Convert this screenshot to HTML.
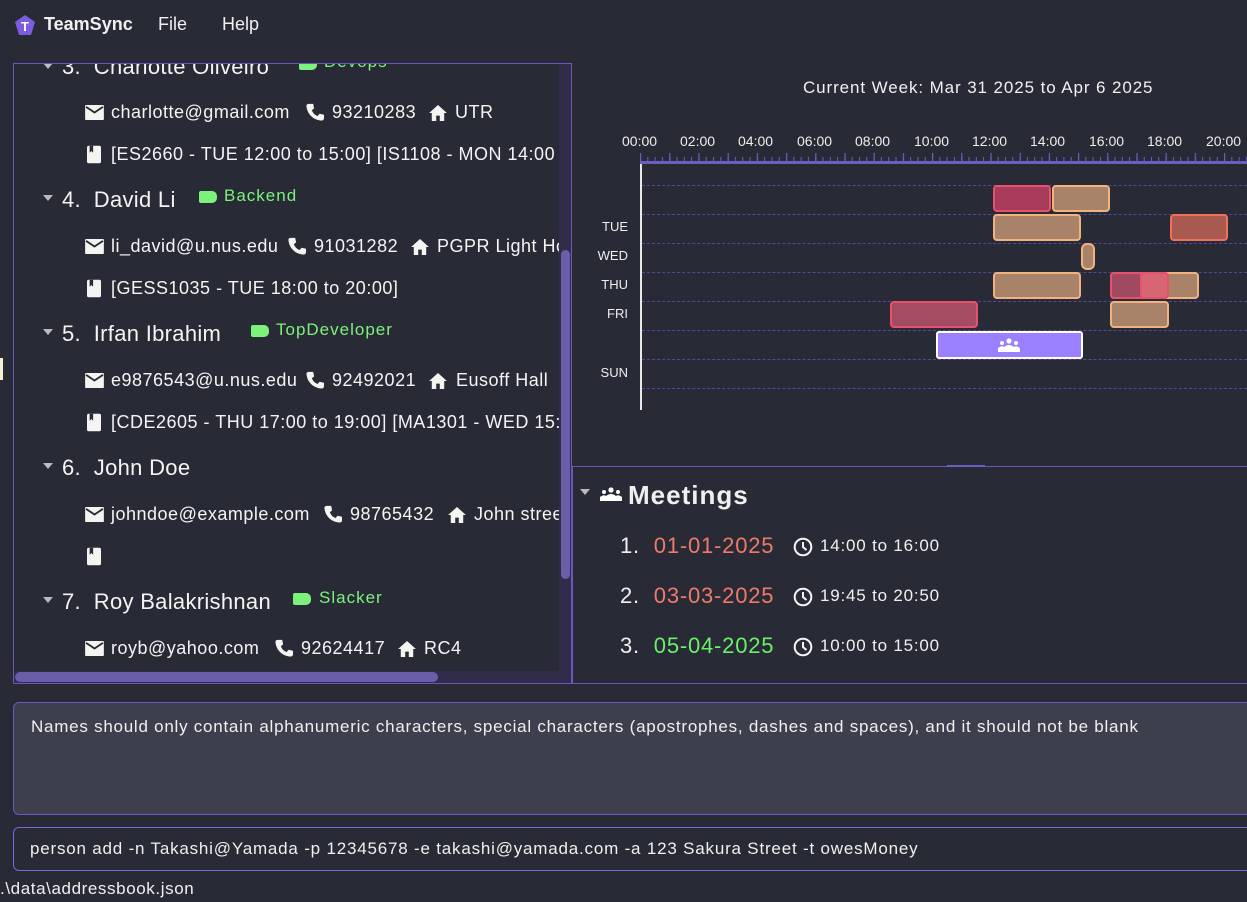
<!DOCTYPE html>
<html><head><meta charset="utf-8"><style>
*{margin:0;padding:0;box-sizing:border-box}
body{width:1247px;height:902px;overflow:hidden;background:#282a36;color:#f0f0f0;font-family:"Liberation Sans",sans-serif;position:relative}
.a{position:absolute;white-space:nowrap}
.nm{font-size:22px;color:#f4f4f4;letter-spacing:0.3px}
.tg{font-size:17px;color:#7cf27c;letter-spacing:1px}
.dt{font-size:18px;color:#f4f4f4;letter-spacing:0.5px}
.tri{width:0;height:0;border-left:5px solid transparent;border-right:5px solid transparent;border-top:6px solid #bbb}
.tagi{width:18px;height:12px;background:#7cf27c;border-radius:2px 5px 5px 2px}
.blk{position:absolute;border-radius:4px;border:2px solid}
.tan{background:#a8836a;border-color:#f2b27e}
.red{background:#a83a5a;border-color:#e8506e}
.dash{position:absolute;left:642px;width:605px;border-top:1.5px dashed #5048a0}
.day{position:absolute;font-size:13px;color:#eee;width:48px;text-align:right;left:580px}
.hr{position:absolute;top:133px;font-size:14px;color:#eee}
</style></head><body>
<svg class="a" style="left:14px;top:14px" width="22" height="22" viewBox="0 0 22 22"><polygon points="11,1 21,8 17,21 5,21 1,8" fill="#7b5ce0"/><text x="11" y="17" text-anchor="middle" font-size="13" font-weight="bold" fill="#fff" font-family="Liberation Sans">T</text></svg>
<div class="a" style="left:44px;top:14px;font-size:18px;font-weight:bold">TeamSync</div>
<div class="a" style="left:158px;top:14px;font-size:18px">File</div>
<div class="a" style="left:222px;top:14px;font-size:18px">Help</div>

<div class="a" style="left:13px;top:63px;width:559px;height:621px;border:1px solid #6a58c0;overflow:hidden">
<div style="position:absolute;left:-13px;top:-63px;width:600px;height:760px">
<svg width="0" height="0" style="position:absolute"><defs>
<symbol id="env" viewBox="0 0 20 16"><rect x="0" y="0" width="20" height="16" rx="1" fill="#f4f4f0"/><path d="M1 2 L10 8 L19 2" stroke="#282a36" stroke-width="2" fill="none"/></symbol>
<symbol id="ph" viewBox="0 0 20 20"><path d="M4 1 L8 1 L9 6 L6.5 8 C8 11.5 9.5 13 13 14.5 L15 12 L20 13 L20 17 C20 18.5 19 19.5 17.5 19.5 C8 19 1 12 0.5 3 C0.5 1.8 1.5 1 4 1Z" fill="#f4f4f0"/></symbol>
<symbol id="hm" viewBox="0 0 20 18"><path d="M10 0 L20 9 L17 9 L17 18 L12 18 L12 12 L8 12 L8 18 L3 18 L3 9 L0 9Z" fill="#f4f4f0"/></symbol>
<symbol id="bk" viewBox="0 0 16 20"><rect x="0" y="0" width="16" height="20" rx="2" fill="#f4f4f0"/><path d="M3 0 L3 8 L5 6 L7 8 L7 0Z" fill="#282a36"/></symbol>
</defs></svg>

<div class="a tri" style="left:42px;top:62px"></div>
<div class="a nm" style="left:61px;top:53px">3.&nbsp; Charlotte Oliveiro</div>
<div class="a tagi" style="left:298px;top:57px"></div><div class="a tg" style="left:323px;top:51px">Devops</div>
<svg class="a" style="left:84px;top:104px" width="19" height="15"><use href="#env"/></svg>
<div class="a dt" style="left:110px;top:101px">charlotte@gmail.com</div>
<svg class="a" style="left:305px;top:102px" width="18" height="18"><use href="#ph"/></svg>
<div class="a dt" style="left:331px;top:101px">93210283</div>
<svg class="a" style="left:428px;top:104px" width="18" height="16"><use href="#hm"/></svg>
<div class="a dt" style="left:454px;top:101px">UTR</div>
<svg class="a" style="left:86px;top:144px" width="14" height="19"><use href="#bk"/></svg>
<div class="a dt" style="left:110px;top:143px">[ES2660 - TUE 12:00 to 15:00] [IS1108 - MON 14:00 to 16:00]</div>

<div class="a tri" style="left:42px;top:194px"></div>
<div class="a nm" style="left:61px;top:186px">4.&nbsp; David Li</div>
<div class="a tagi" style="left:198px;top:190px"></div><div class="a tg" style="left:223px;top:185px">Backend</div>
<svg class="a" style="left:84px;top:238px" width="19" height="15"><use href="#env"/></svg>
<div class="a dt" style="left:110px;top:235px">li_david@u.nus.edu</div>
<svg class="a" style="left:287px;top:236px" width="18" height="18"><use href="#ph"/></svg>
<div class="a dt" style="left:313px;top:235px">91031282</div>
<svg class="a" style="left:410px;top:238px" width="18" height="16"><use href="#hm"/></svg>
<div class="a dt" style="left:436px;top:235px">PGPR Light House</div>
<svg class="a" style="left:86px;top:278px" width="14" height="19"><use href="#bk"/></svg>
<div class="a dt" style="left:110px;top:277px">[GESS1035 - TUE 18:00 to 20:00]</div>

<div class="a tri" style="left:42px;top:328px"></div>
<div class="a nm" style="left:61px;top:320px">5.&nbsp; Irfan Ibrahim</div>
<div class="a tagi" style="left:250px;top:324px"></div><div class="a tg" style="left:275px;top:319px">TopDeveloper</div>
<svg class="a" style="left:84px;top:372px" width="19" height="15"><use href="#env"/></svg>
<div class="a dt" style="left:110px;top:369px">e9876543@u.nus.edu</div>
<svg class="a" style="left:305px;top:370px" width="18" height="18"><use href="#ph"/></svg>
<div class="a dt" style="left:331px;top:369px">92492021</div>
<svg class="a" style="left:428px;top:372px" width="18" height="16"><use href="#hm"/></svg>
<div class="a dt" style="left:455px;top:369px">Eusoff Hall</div>
<svg class="a" style="left:86px;top:412px" width="14" height="19"><use href="#bk"/></svg>
<div class="a dt" style="left:110px;top:411px">[CDE2605 - THU 17:00 to 19:00] [MA1301 - WED 15:00 to 16:00]</div>

<div class="a tri" style="left:42px;top:462px"></div>
<div class="a nm" style="left:61px;top:454px">6.&nbsp; John Doe</div>
<svg class="a" style="left:84px;top:506px" width="19" height="15"><use href="#env"/></svg>
<div class="a dt" style="left:110px;top:503px">johndoe@example.com</div>
<svg class="a" style="left:323px;top:504px" width="18" height="18"><use href="#ph"/></svg>
<div class="a dt" style="left:349px;top:503px">98765432</div>
<svg class="a" style="left:447px;top:506px" width="18" height="16"><use href="#hm"/></svg>
<div class="a dt" style="left:473px;top:503px">John street</div>
<svg class="a" style="left:86px;top:546px" width="14" height="19"><use href="#bk"/></svg>

<div class="a tri" style="left:42px;top:596px"></div>
<div class="a nm" style="left:61px;top:588px">7.&nbsp; Roy Balakrishnan</div>
<div class="a tagi" style="left:292px;top:592px"></div><div class="a tg" style="left:318px;top:587px">Slacker</div>
<svg class="a" style="left:84px;top:640px" width="19" height="15"><use href="#env"/></svg>
<div class="a dt" style="left:110px;top:637px">royb@yahoo.com</div>
<svg class="a" style="left:274px;top:638px" width="18" height="18"><use href="#ph"/></svg>
<div class="a dt" style="left:300px;top:637px">92624417</div>
<svg class="a" style="left:397px;top:640px" width="18" height="16"><use href="#hm"/></svg>
<div class="a dt" style="left:423px;top:637px">RC4</div>
</div>
<div style="position:absolute;left:545px;top:0;width:13px;height:620px;background:#302c4a"></div>
<div style="position:absolute;left:547px;top:186px;width:9px;height:329px;background:#6a5ea8;border-radius:5px"></div>
<div style="position:absolute;left:0;top:607px;width:545px;height:12px;background:#302c4a"></div>
<div style="position:absolute;left:1px;top:608px;width:423px;height:10px;background:#6a5ea8;border-radius:5px"></div>
</div>
<div class="a" style="left:0;top:358px;width:3px;height:22px;background:#f4f0d0"></div>

<div class="a" style="left:803px;top:78px;font-size:17px;letter-spacing:0.9px">Current Week: Mar 31 2025 to Apr 6 2025</div>
<div class="hr" style="left:622px">00:00</div><div class="hr" style="left:680px">02:00</div><div class="hr" style="left:738px">04:00</div><div class="hr" style="left:797px">06:00</div><div class="hr" style="left:855px">08:00</div><div class="hr" style="left:914px">10:00</div><div class="hr" style="left:972px">12:00</div><div class="hr" style="left:1030px">14:00</div><div class="hr" style="left:1089px">16:00</div><div class="hr" style="left:1147px">18:00</div><div class="hr" style="left:1206px">20:00</div>
<svg class="a" style="left:640px;top:150px" width="607" height="14">
<defs><pattern id="tk" x="0" y="0" width="7.3" height="14" patternUnits="userSpaceOnUse"><rect x="0" y="7" width="1" height="7" fill="#6a5ec0"/></pattern>
<pattern id="tk2" x="0" y="0" width="29.2" height="14" patternUnits="userSpaceOnUse"><rect x="0" y="3" width="1.2" height="11" fill="#6a5ec0"/></pattern></defs>
<rect x="0" y="0" width="607" height="14" fill="url(#tk)"/><rect x="0" y="0" width="607" height="14" fill="url(#tk2)"/><rect x="0" y="11" width="607" height="3" fill="#6a5ec0"/></svg>
<div class="a" style="left:640px;top:164px;width:1.5px;height:246px;background:#e8e8e8"></div>
<div class="dash" style="top:185px"></div><div class="dash" style="top:214px"></div><div class="dash" style="top:243px"></div><div class="dash" style="top:272px"></div><div class="dash" style="top:301px"></div><div class="dash" style="top:330px"></div><div class="dash" style="top:359px"></div><div class="dash" style="top:388px"></div>
<div class="day" style="top:219px">TUE</div><div class="day" style="top:248px">WED</div><div class="day" style="top:277px">THU</div><div class="day" style="top:306px">FRI</div><div class="day" style="top:365px">SUN</div>
<div class="blk red" style="left:993px;top:185px;width:58px;height:27px"></div>
<div class="blk tan" style="left:1052px;top:185px;width:58px;height:27px"></div>
<div class="blk tan" style="left:993px;top:214px;width:88px;height:27px"></div>
<div class="blk" style="left:1170px;top:214px;width:58px;height:27px;background:#a85a50;border-color:#f07058"></div>
<div class="blk tan" style="left:1081px;top:243px;width:14px;height:27px;border-radius:6px"></div>
<div class="blk tan" style="left:993px;top:272px;width:88px;height:27px"></div>
<div class="blk tan" style="left:1110px;top:272px;width:89px;height:27px"></div>
<div class="blk" style="left:1110px;top:272px;width:58px;height:27px;background:#a04a62;border-color:#e8506e"></div>
<div class="blk" style="left:1140px;top:272px;width:29px;height:27px;background:#d86672;border-color:#e8506e"></div>
<div class="blk" style="left:890px;top:301px;width:88px;height:27px;background:#a44c62;border-color:#e8506e"></div>
<div class="blk tan" style="left:1110px;top:301px;width:59px;height:27px"></div>
<div class="blk" style="left:936px;top:331px;width:147px;height:28px;background:#9a80ff;border-color:#fff;border-radius:3px"></div>
<svg class="a" style="left:998px;top:338px" width="22" height="14" viewBox="0 0 22 14"><circle cx="11" cy="3" r="2.6" fill="#fff"/><circle cx="4" cy="5" r="2" fill="#fff"/><circle cx="18" cy="5" r="2" fill="#fff"/><path d="M6 14 L6 9 Q11 5 16 9 L16 14Z M0 14 L0 10 Q4 7 6 9 L6 14Z M16 14 L16 9 Q18 7 22 10 L22 14Z" fill="#fff"/></svg>

<div class="a" style="left:572px;top:466px;width:680px;height:218px;border:1px solid #6a58c0"></div>
<div class="a" style="left:947px;top:465px;width:38px;height:2px;background:#6a5ec0"></div>
<div class="a tri" style="left:580px;top:489px"></div>
<svg class="a" style="left:599px;top:487px" width="24" height="14" viewBox="0 0 22 14"><circle cx="11" cy="3" r="2.6" fill="#fff"/><circle cx="4" cy="5" r="2" fill="#fff"/><circle cx="18" cy="5" r="2" fill="#fff"/><path d="M6 14 L6 9 Q11 5 16 9 L16 14Z M0 14 L0 10 Q4 7 6 9 L6 14Z M16 14 L16 9 Q18 7 22 10 L22 14Z" fill="#fff"/></svg>
<div class="a" style="left:628px;top:480px;font-size:26px;font-weight:bold;letter-spacing:1px">Meetings</div>
<div class="a" style="left:620px;top:533px;font-size:22px;letter-spacing:0.8px">1.&nbsp; <span style="color:#f07a6a">01-01-2025</span></div>
<div class="a" style="left:620px;top:583px;font-size:22px;letter-spacing:0.8px">2.&nbsp; <span style="color:#f07a6a">03-03-2025</span></div>
<div class="a" style="left:620px;top:633px;font-size:22px;letter-spacing:0.8px">3.&nbsp; <span style="color:#6af06a">05-04-2025</span></div>
<svg class="a" style="left:793px;top:537px" width="20" height="20"><circle cx="10" cy="10" r="8.3" stroke="#f4f4f4" stroke-width="2" fill="none"/><path d="M10 5 L10 10 L13.5 13" stroke="#f4f4f4" stroke-width="2" fill="none"/></svg>
<svg class="a" style="left:793px;top:587px" width="20" height="20"><circle cx="10" cy="10" r="8.3" stroke="#f4f4f4" stroke-width="2" fill="none"/><path d="M10 5 L10 10 L13.5 13" stroke="#f4f4f4" stroke-width="2" fill="none"/></svg>
<svg class="a" style="left:793px;top:637px" width="20" height="20"><circle cx="10" cy="10" r="8.3" stroke="#f4f4f4" stroke-width="2" fill="none"/><path d="M10 5 L10 10 L13.5 13" stroke="#f4f4f4" stroke-width="2" fill="none"/></svg>
<div class="a" style="left:820px;top:536px;font-size:17px;letter-spacing:0.8px">14:00 to 16:00</div>
<div class="a" style="left:820px;top:586px;font-size:17px;letter-spacing:0.8px">19:45 to 20:50</div>
<div class="a" style="left:820px;top:636px;font-size:17px;letter-spacing:0.8px">10:00 to 15:00</div>

<div class="a" style="left:13px;top:702px;width:1250px;height:113px;background:#3d3f4c;border:1.5px solid #6a58c0;border-radius:6px"></div>
<div class="a" style="left:31px;top:717px;font-size:17px;letter-spacing:0.75px">Names should only contain alphanumeric characters, special characters (apostrophes, dashes and spaces), and it should not be blank</div>
<div class="a" style="left:13px;top:827px;width:1250px;height:44px;background:#282a36;border:1.5px solid #7a66e0;border-radius:6px"></div>
<div class="a" style="left:30px;top:839px;font-size:17px;letter-spacing:0.8px">person add -n Takashi@Yamada -p 12345678 -e takashi@yamada.com -a 123 Sakura Street -t owesMoney</div>
<div class="a" style="left:0;top:879px;font-size:17px;letter-spacing:0.6px">.\data\addressbook.json</div>
</body></html>
